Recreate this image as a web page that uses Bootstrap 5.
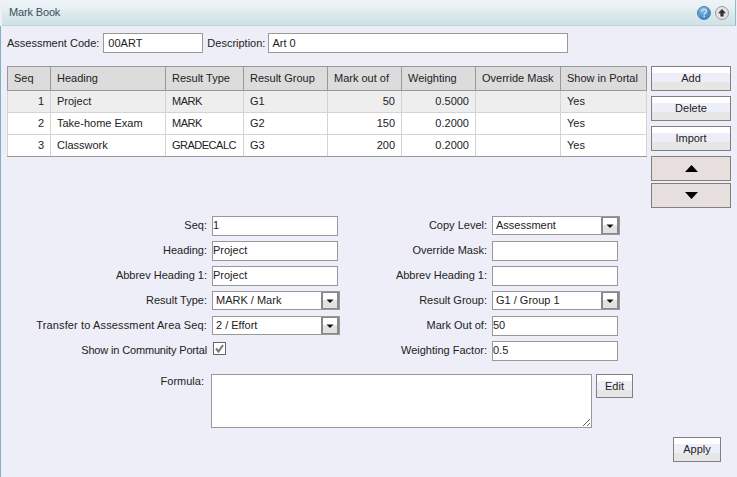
<!DOCTYPE html>
<html lang="en">
<head>
<meta charset="utf-8">
<title>Mark Book</title>
<link rel="stylesheet" href="https://cdn.jsdelivr.net/npm/bootstrap@5.3.0/dist/css/bootstrap.min.css">
<style>
html,body{height:100%;}
body{background:#edeef7;font-family:"Liberation Sans",Arial,sans-serif;font-size:11px;line-height:13px;color:#222;overflow:hidden;}
.titlebar{height:26px;margin:0 1px 0 2px;padding:0 6px 0 7px;background:linear-gradient(#edf2f7 0,#e9f1f4 30%,#dce9ec 55%,#cfe2e5 100%);border-bottom:1px solid #b9d2d6;border-right:1px solid #8fbcc6;color:#3d4f5c;font-size:11px;letter-spacing:-.15px;}
.titlebar svg{display:block;}
.shell{height:451px;border-left:1px solid #7fb0bd;padding-left:1px;}
.plain-input{display:block;height:20px;border:1px solid #999;background:#fff;padding:0 2px 1px;font-size:11px;line-height:17px;color:#222;border-radius:0;outline:0;box-shadow:none;flex:none;}
.code-input{width:100px;padding-left:4px;}
.desc-input{width:300px;padding-left:3px;}
.top-row{padding:7px 0 0 5px;height:40px;}
.gap-tight{margin-left:4px;margin-right:3px;}
.grid-zone{padding-left:5px;height:142px;}
.mark-grid{width:639px;table-layout:fixed;border-collapse:collapse;margin:0;border:1px solid #999;--bs-table-bg:transparent;flex:none;}
.mark-grid th,.mark-grid td{padding:0 6px;font-weight:400;font-size:11px;color:#222;vertical-align:middle;border:1px solid #d4d4d4;box-shadow:none;overflow:visible;white-space:nowrap;}
.mark-grid th{height:24px;background:#dcdcdc;border-color:#999;}
.mark-grid td{height:22px;background:#fff;}
.mark-grid tr.picked td{background:#eee;}
.mark-grid td.num{text-align:right;}
.mark-grid tbody tr:last-child td{border-bottom-color:#999;}
.caps-tight{letter-spacing:-.5px;}
.side-stack{width:80px;gap:5px;margin-left:4px;flex:none;}
.flat-btn{display:block;padding:0;border:1px solid #808080;border-radius:0;height:25px;width:80px;color:#222;font-size:11px;line-height:13px;background:linear-gradient(#fff 0,#fff 26%,#edeef7 26%,#edeef7 66%,#e6e6e6 66%,#e6e6e6 100%);}
.side-stack .flat-btn.arrow-btn{background:#e6dfdd;display:flex;align-items:center;justify-content:center;}
.arrow-gap{margin-top:-3px;}
.field-zone{padding-top:5px;}
.field-col{width:280px;flex:none;}
.field-row{display:flex;align-items:center;height:25px;}
.field-name{width:210px;text-align:right;padding-right:5px;flex:none;}
.name-wide{letter-spacing:.13px;}
.name-narrow{letter-spacing:-.16px;}
.field-input{width:126px;padding-left:0;}
.field-select{appearance:none;-webkit-appearance:none;flex:none;width:128px;height:19px;margin-bottom:1px;border:1px solid #999;border-radius:0;background-color:#fff;padding:0 2px 0 3px;font-size:11px;color:#222;background-image:url("data:image/svg+xml,%3Csvg xmlns='http://www.w3.org/2000/svg' width='18' height='19'%3E%3Crect x='1' y='1' width='16' height='17' fill='%23e2e2e2' stroke='%23888' stroke-width='2'/%3E%3Crect x='2' y='2' width='14' height='7' fill='%23fff'/%3E%3Cpath d='M5.5 8.5h7L9 12z' fill='%23111'/%3E%3C/svg%3E");background-repeat:no-repeat;background-position:right center;}
.check-box{width:13px;height:13px;border:1px solid #666;background:#fff;display:block;margin:0 0 5px 1px;flex:none;}
.formula-row{margin-top:11px;height:63px;}
.formula-name{width:209px;text-align:right;padding:1px 7px 0 0;flex:none;}
.formula-box{display:block;width:381px;height:54px;border:1px solid #999;background:#fff;border-radius:0;resize:both;padding:2px;font-size:11px;flex:none;}
.edit-btn{width:37px;height:24px;margin-left:4px;flex:none;}
.apply-wrap{width:719px;}
.apply-btn{width:48px;}
</style>
</head>
<body>
<div class="titlebar d-flex align-items-center justify-content-between">
  <span>Mark Book</span>
  <span class="d-flex align-items-center gap-1">
    <svg width="14" height="14" viewBox="0 0 14 14"><defs><radialGradient id="g1" cx=".4" cy=".3" r=".8"><stop offset="0" stop-color="#8fc0e6"/><stop offset="1" stop-color="#2a73b8"/></radialGradient></defs><circle cx="7" cy="7" r="6.5" fill="url(#g1)" stroke="#4a86bb"/><path d="M4.8 5.4c0-3 4.6-3 4.6-.2 0 1.8-2.2 1.7-2.2 3.5" fill="none" stroke="#cfe3f3" stroke-width="1.3"/><rect x="6.4" y="9.6" width="1.6" height="1.6" fill="#cfe3f3"/></svg>
    <svg width="14" height="14" viewBox="0 0 14 14"><circle cx="7" cy="7" r="6.5" fill="#e4e4e4" stroke="#9a9a9a"/><path d="M7 3 11 7.2H8.6V10.5H5.4V7.2H3z" fill="#333"/></svg>
  </span>
</div>
<div class="shell">
  <div class="top-row d-flex align-items-start">
    <label class="pt-1 me-1" for="code">Assessment Code:</label>
    <input id="code" class="plain-input code-input" value="00ART">
    <label class="pt-1 gap-tight" for="desc">Description:</label>
    <input id="desc" class="plain-input desc-input" value="Art 0">
  </div>
  <div class="grid-zone d-flex align-items-start">
    <table class="table mark-grid">
      <colgroup><col style="width:43px"><col style="width:115px"><col style="width:78px"><col style="width:84px"><col style="width:74px"><col style="width:74px"><col style="width:85px"><col style="width:86px"></colgroup>
      <thead><tr><th>Seq</th><th>Heading</th><th>Result Type</th><th>Result Group</th><th>Mark out of</th><th>Weighting</th><th>Override Mask</th><th>Show in Portal</th></tr></thead>
      <tbody>
        <tr class="picked"><td class="num">1</td><td>Project</td><td class="caps-tight">MARK</td><td>G1</td><td class="num">50</td><td class="num">0.5000</td><td></td><td>Yes</td></tr>
        <tr><td class="num">2</td><td>Take-home Exam</td><td class="caps-tight">MARK</td><td>G2</td><td class="num">150</td><td class="num">0.2000</td><td></td><td>Yes</td></tr>
        <tr><td class="num">3</td><td>Classwork</td><td class="caps-tight">GRADECALC</td><td>G3</td><td class="num">200</td><td class="num">0.2000</td><td></td><td>Yes</td></tr>
      </tbody>
    </table>
    <div class="side-stack d-flex flex-column">
      <button class="btn flat-btn">Add</button>
      <button class="btn flat-btn">Delete</button>
      <button class="btn flat-btn">Import</button>
      <button class="btn flat-btn arrow-btn" aria-label="Move up"><svg width="13" height="7" viewBox="0 0 13 7"><path d="M0 7 6.5 0 13 7z" fill="#000"/></svg></button>
      <button class="btn flat-btn arrow-btn arrow-gap" aria-label="Move down"><svg width="13" height="7" viewBox="0 0 13 7"><path d="M0 0h13L6.500 7z" fill="#000"/></svg></button>
    </div>
  </div>
  <div class="field-zone d-flex">
    <div class="field-col">
      <div class="field-row"><span class="field-name">Seq:</span><input class="plain-input field-input" value="1"></div>
      <div class="field-row"><span class="field-name">Heading:</span><input class="plain-input field-input" value="Project"></div>
      <div class="field-row"><span class="field-name">Abbrev Heading 1:</span><input class="plain-input field-input" value="Project"></div>
      <div class="field-row"><span class="field-name">Result Type:</span><select class="field-select"><option>MARK / Mark</option></select></div>
      <div class="field-row"><span class="field-name name-wide">Transfer to Assessment Area Seq:</span><select class="field-select"><option>2 / Effort</option></select></div>
      <div class="field-row"><span class="field-name name-narrow">Show in Community Portal</span><span class="check-box"><svg width="11" height="11" viewBox="0 0 11 11" class="d-block"><path d="M2 5.500 4.500 8.500 9 2" fill="none" stroke="#777" stroke-width="2"/></svg></span></div>
    </div>
    <div class="field-col">
      <div class="field-row"><span class="field-name">Copy Level:</span><select class="field-select"><option>Assessment</option></select></div>
      <div class="field-row"><span class="field-name">Override Mask:</span><input class="plain-input field-input" value=""></div>
      <div class="field-row"><span class="field-name">Abbrev Heading 1:</span><input class="plain-input field-input" value=""></div>
      <div class="field-row"><span class="field-name">Result Group:</span><select class="field-select"><option>G1 / Group 1</option></select></div>
      <div class="field-row"><span class="field-name">Mark Out of:</span><input class="plain-input field-input" value="50"></div>
      <div class="field-row"><span class="field-name">Weighting Factor:</span><input class="plain-input field-input" value="0.5"></div>
    </div>
  </div>
  <div class="formula-row d-flex align-items-start">
    <span class="formula-name">Formula:</span>
    <textarea class="formula-box"></textarea>
    <button class="btn flat-btn edit-btn">Edit</button>
  </div>
  <div class="apply-wrap d-flex justify-content-end">
    <button class="btn flat-btn apply-btn">Apply</button>
  </div>
</div>
</body>
</html>
